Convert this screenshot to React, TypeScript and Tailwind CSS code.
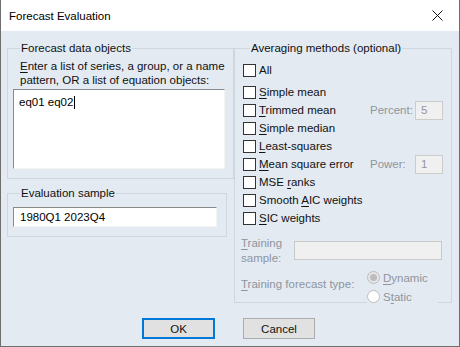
import React from 'react';

const font = { fontFamily: '"Liberation Sans", Arial, sans-serif' };

function U({ children }: { children: React.ReactNode }) {
  return <span className="underline underline-offset-[2px]">{children}</span>;
}

function Check({ children }: { children: React.ReactNode }) {
  return (
    <label className="flex items-center h-[18px]">
      <span className="w-[13px] h-[13px] border border-[#333333] bg-white shrink-0" />
      <span className="ml-[3px] text-[#111]">{children}</span>
    </label>
  );
}

function Radio({ checked, children }: { checked?: boolean; children: React.ReactNode }) {
  return (
    <div className="flex items-center h-[19px]">
      <span
        className={
          'w-[13px] h-[13px] rounded-full border border-[#bcbcbc] flex items-center justify-center shrink-0 ' +
          (checked ? 'bg-[#e6e6e6]' : 'bg-white')
        }
      >
        {checked && <span className="w-[7px] h-[7px] rounded-full bg-[#bdbdbd]" />}
      </span>
      <span className="ml-[3px] text-[#8f959c]">{children}</span>
    </div>
  );
}

function SmallBox({ value }: { value: string }) {
  return (
    <div className="w-[28px] h-[19px] border border-[#cccccc] bg-[#f0f0f0] text-[#8f959c] pl-[5px] leading-[17px]">
      {value}
    </div>
  );
}

export default function App() {
  return (
    <div
      className="w-[460px] h-[347px] bg-[#e3eaf2] border-x border-b border-[#6e6e6e] text-[11.5px] leading-[14px] text-black"
      style={font}
    >
      {/* title bar */}
      <div className="h-[31px] bg-white flex items-center justify-between pl-[8px] pr-[16px]">
        <span className="text-[11.5px]">Forecast Evaluation</span>
        <svg width="11" height="11" viewBox="0 0 11 11">
          <path d="M0.5 0.5 L10.5 10.5 M10.5 0.5 L0.5 10.5" stroke="#111" strokeWidth="1" />
        </svg>
      </div>

      <div className="flex gap-[7px] pl-[6px] pt-[9px]">
        {/* left column */}
        <div className="w-[220px] flex flex-col">
          <fieldset className="border border-[#cfd6de] pl-[5px] pr-[8px] pb-[9px]">
            <legend className="ml-[7px] px-[1px] leading-[16px] text-[#111]">Forecast data objects</legend>
            <div className="pl-[7px] mt-[3px] text-[#111] whitespace-nowrap">
              <div><U>E</U>nter a list of series, a group, or a name</div>
              <div>pattern, OR a list of equation objects:</div>
            </div>
            <div className="mt-[2px] h-[80px] bg-white border-t border-l border-[#8a8a8a] border-r border-b border-r-[#f4f4f4] border-b-[#f4f4f4] pl-[5px] pt-[5px]">
              <span>eq01 eq02</span>
              <span className="inline-block w-[1px] h-[13px] bg-black align-middle ml-[1px]" />
            </div>
          </fieldset>

          <fieldset className="mt-[6px] border border-[#cfd6de] pl-[5px] pr-[9px] pb-[9px]">
            <legend className="ml-[7px] px-[1px] leading-[16px] text-[#111]">Evaluation sample</legend>
            <div className="mt-[6px] h-[20px] bg-white border-t border-l border-[#8a8a8a] border-r border-b border-r-[#f4f4f4] border-b-[#f4f4f4] pl-[6px] leading-[18px]">
              1980Q1 2023Q4
            </div>
          </fieldset>
        </div>

        {/* right column */}
        <div className="w-[218px] flex flex-col">
          <fieldset className="border border-[#cfd6de] pl-[8px] pr-[8px]">
            <legend className="ml-[7px] px-[1px] leading-[16px] text-[#111]">Averaging methods (optional)</legend>
            <div className="mt-[5px]">
              <Check>All</Check>
            </div>
            <div className="mt-[4px] flex flex-col">
              <Check><U>S</U>imple mean</Check>
              <div className="flex items-center justify-between h-[18px]">
                <Check><U>T</U>rimmed mean</Check>
                <div className="flex items-center">
                  <span className="w-[45px] text-[#8f959c]">Percent:</span>
                  <SmallBox value="5" />
                </div>
              </div>
              <Check><U>S</U>imple median</Check>
              <Check><U>L</U>east-squares</Check>
              <div className="flex items-center justify-between h-[18px]">
                <Check><U>M</U>ean square error</Check>
                <div className="flex items-center">
                  <span className="w-[45px] text-[#8f959c]">Power:</span>
                  <SmallBox value="1" />
                </div>
              </div>
              <Check>MSE <U>r</U>anks</Check>
              <Check>Smooth <U>A</U>IC weights</Check>
              <Check><U>S</U>IC weights</Check>
            </div>

            <div className="mt-[9px] flex items-start -ml-[2px] pr-[1px]">
              <div className="w-[53px] text-[#8f959c] leading-[15px]">
                <div><U>T</U>raining</div>
                <div>sample:</div>
              </div>
              <div className="flex-1 h-[19px] mt-[5px] border border-[#c8c8c8] bg-[#f0f0f0]" />
            </div>

            <div className="mt-[2px] flex items-start -ml-[2px]">
              <div className="w-[126px] text-[#8f959c] pt-[9px] whitespace-nowrap"><U>T</U>raining forecast type:</div>
              <div className="relative -mb-[4px] pr-[10px] bg-[#e3eaf2]">
                <Radio checked><U>D</U>ynamic</Radio>
                <Radio>S<U>t</U>atic</Radio>
              </div>
            </div>
          </fieldset>
        </div>
      </div>

      {/* buttons */}
      <div className="flex gap-[28px] pl-[141px] mt-[15px]">
        <button className="w-[73px] h-[21px] border-2 border-[#0078d7] bg-[#e1e1e1] text-[#111]">OK</button>
        <button className="w-[72px] h-[21px] border border-[#adadad] bg-[#e1e1e1] text-[#111]">Cancel</button>
      </div>
    </div>
  );
}
